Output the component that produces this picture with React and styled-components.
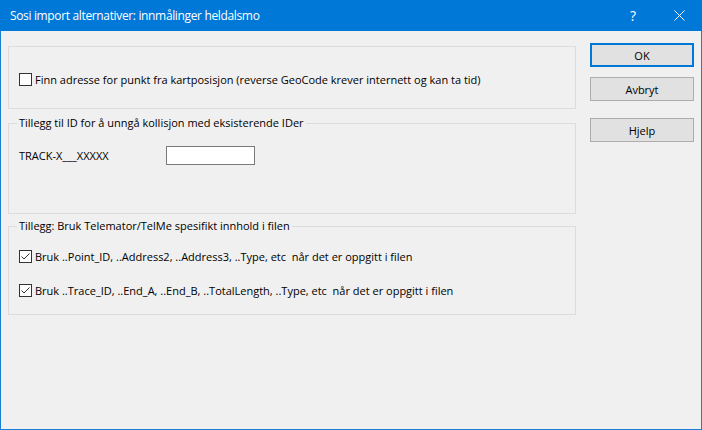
import React, { useState } from "react";
import styled, { createGlobalStyle } from "styled-components";

const GlobalStyle = createGlobalStyle`
  html, body {
    margin: 0;
    padding: 0;
    background: #f0f0f0;
  }
  body {
    font-family: "Open Sans", "Liberation Sans", sans-serif;
  }
`;

const Window = styled.div`
  width: 702px;
  height: 430px;
  box-sizing: border-box;
  border: 1px solid #1a7fd4;
  border-top: 0;
  background: #f0f0f0;
  display: flex;
  flex-direction: column;
`;

const TitleBar = styled.div`
  height: 31px;
  background: #0078d7;
  display: flex;
  align-items: center;
  color: white;
  flex-shrink: 0;
  margin: 0 -1px;
`;

const Title = styled.div`
  flex: 1;
  padding-left: 10px;
  font-family: "Open Sans", sans-serif;
  font-size: 12px;
  letter-spacing: -0.35px;
`;

const CaptionButton = styled.div`
  width: 46px;
  height: 31px;
  display: flex;
  align-items: center;
  justify-content: center;
  font-size: 14px;
  font-family: "Open Sans", sans-serif;
`;

const Body = styled.div`
  flex: 1;
  display: flex;
  padding: 15px 0 0 7px;
  gap: 14px;
`;

const LeftCol = styled.div`
  width: 568px;
  display: flex;
  flex-direction: column;
`;

const RightCol = styled.div`
  display: flex;
  flex-direction: column;
  margin-top: -3px;
`;

const Group = styled.fieldset`
  margin: 0 0 ${(p) => p.$gap || 0}px 0;
  padding: 0 0 0 10px;
  border: 1px solid #dcdcdc;
  height: ${(p) => p.$height}px;
  box-sizing: border-box;
  min-width: 0;
`;

const Legend = styled.legend`
  margin-left: -2px;
  padding: 0 2px;
  font-size: 11px;
  line-height: 14px;
  color: #000;
`;

const Row = styled.div`
  height: 20px;
  display: flex;
  align-items: center;
  margin-top: ${(p) => p.$top || 0}px;
  font-size: 11px;
  color: #000;
`;

const Box = styled.span`
  width: 13px;
  height: 13px;
  box-sizing: border-box;
  border: 1px solid #333;
  background: #fff;
  display: inline-flex;
  align-items: center;
  justify-content: center;
  margin-right: 3px;
  flex-shrink: 0;
`;

const Label = styled.span`
  width: 147px;
`;

const Input = styled.input`
  width: 89px;
  height: 19px;
  box-sizing: border-box;
  border: 1px solid #7a7a7a;
  background: #fff;
  padding: 0 3px;
  margin: 0;
  outline: none;
  font-size: 11px;
`;

const Button = styled.button`
  width: 104px;
  height: 24px;
  box-sizing: border-box;
  background: #e1e1e1;
  border: ${(p) => (p.$default ? "2px solid #0078d7" : "1px solid #adadad")};
  font-family: "Open Sans", sans-serif;
  font-size: 11px;
  color: #000;
  padding: 0;
  margin-bottom: ${(p) => p.$gap || 0}px;
`;

const Check = ({ checked }) => (
  <Box>
    {checked && (
      <svg width="11" height="11" viewBox="0 0 11 11">
        <polyline points="1.5,5.5 4,8 9.5,2.5" fill="none" stroke="#333" strokeWidth="1" />
      </svg>
    )}
  </Box>
);

export default function App() {
  const [suffix, setSuffix] = useState("");
  return (
    <>
      <GlobalStyle />
      <Window>
        <TitleBar>
          <Title>Sosi import alternativer: innmålinger heldalsmo</Title>
          <CaptionButton>?</CaptionButton>
          <CaptionButton>
            <svg width="11" height="11" viewBox="0 0 11 11">
              <path d="M0.5 0.5 L10.5 10.5 M10.5 0.5 L0.5 10.5" stroke="#fff" strokeWidth="1" />
            </svg>
          </CaptionButton>
        </TitleBar>
        <Body>
          <LeftCol>
            <Group $height={63} $gap={7}>
              <Row $top={22}>
                <Check />
                Finn adresse for punkt fra kartposisjon (reverse GeoCode krever internett og kan ta tid)
              </Row>
            </Group>
            <Group $height={98} $gap={5}>
              <Legend>Tillegg til ID for å unngå kollisjon med eksisterende IDer</Legend>
              <Row $top={15}>
                <Label>TRACK-X___XXXXX</Label>
                <Input value={suffix} onChange={(e) => setSuffix(e.target.value)} />
              </Row>
            </Group>
            <Group $height={96}>
              <Legend>Tillegg: Bruk Telemator/TelMe spesifikt innhold i filen</Legend>
              <Row $top={13}>
                <Check checked />
                Bruk ..Point_ID, ..Address2, ..Address3, ..Type, etc&nbsp; når det er oppgitt i filen
              </Row>
              <Row $top={14}>
                <Check checked />
                Bruk ..Trace_ID, ..End_A, ..End_B, ..TotalLength, ..Type, etc&nbsp; når det er oppgitt i filen
              </Row>
            </Group>
          </LeftCol>
          <RightCol>
            <Button $default $gap={10}>OK</Button>
            <Button $gap={17}>Avbryt</Button>
            <Button>Hjelp</Button>
          </RightCol>
        </Body>
      </Window>
    </>
  );
}
